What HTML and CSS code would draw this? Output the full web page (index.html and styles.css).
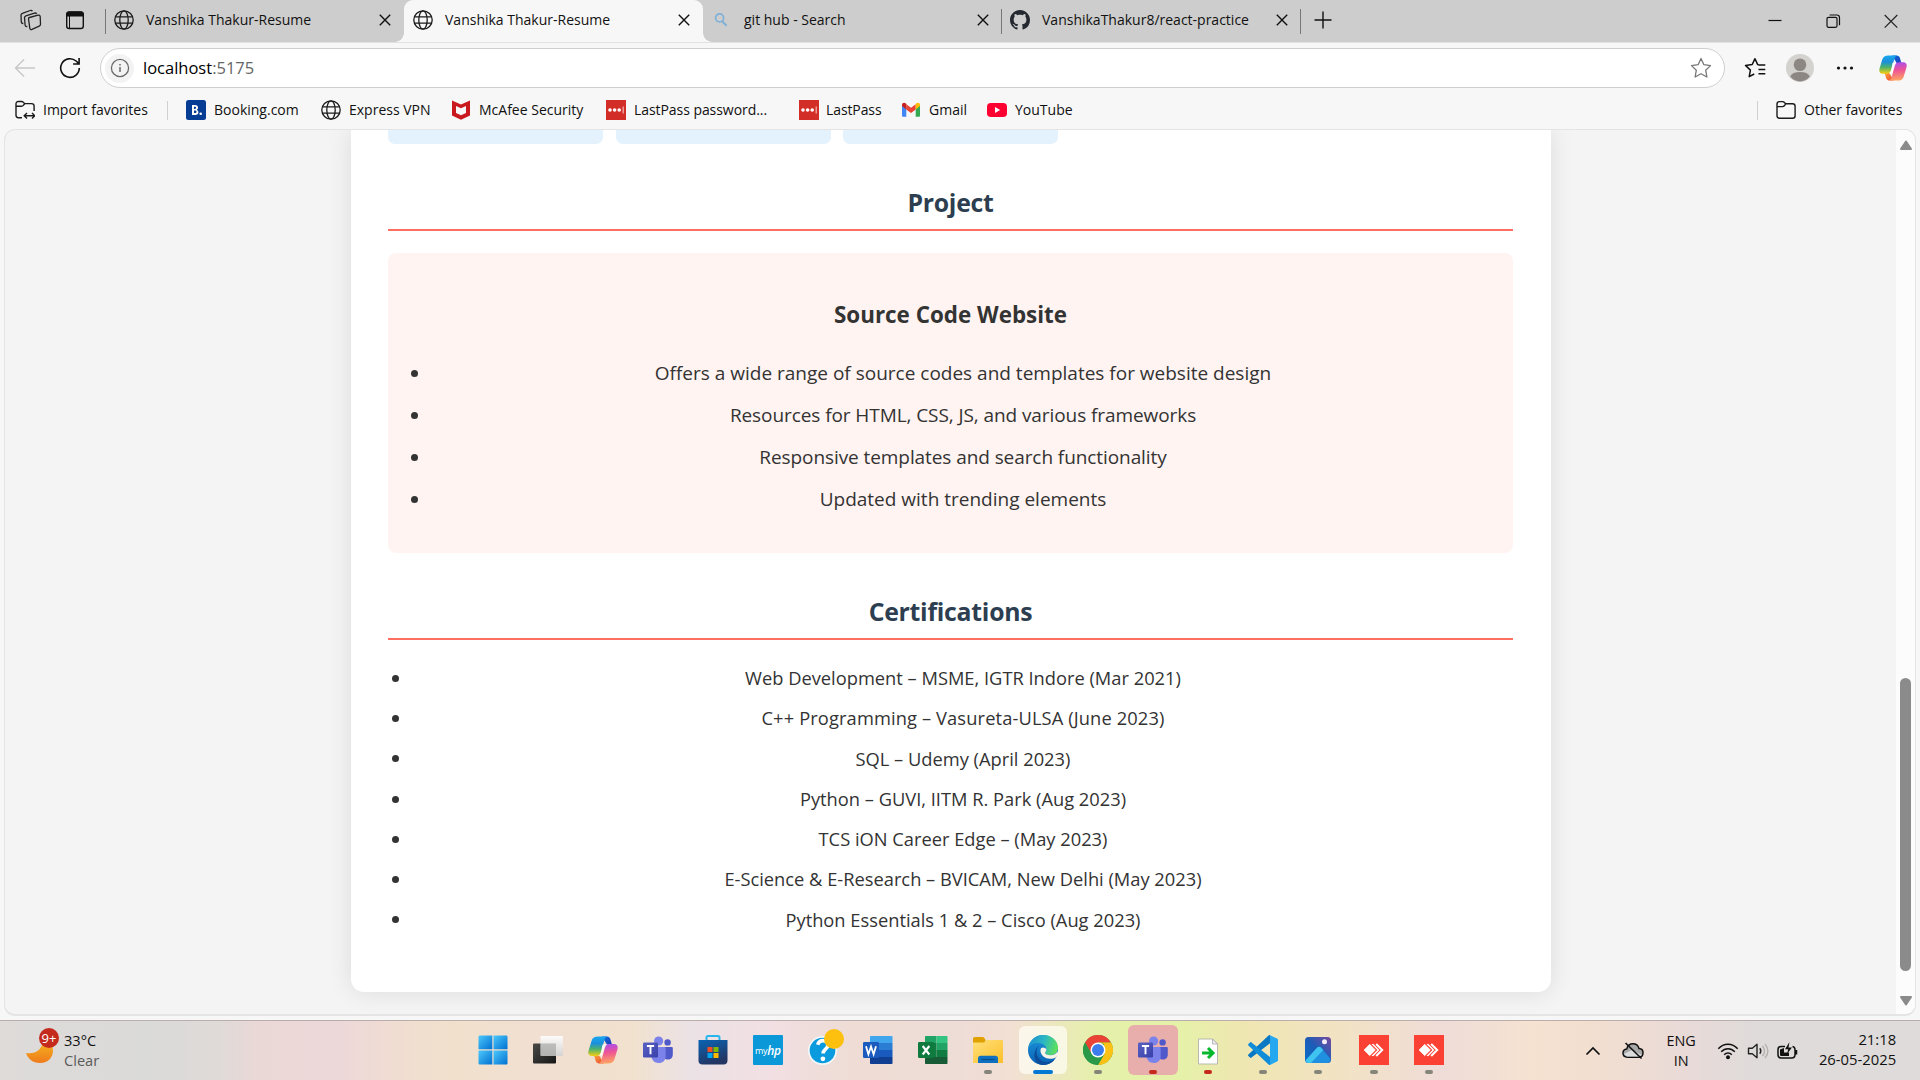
FILE: index.html
```html
<!DOCTYPE html>
<html lang="en">
<head>
<meta charset="utf-8">
<title>Vanshika Thakur-Resume</title>
<link rel="stylesheet" href="styles.css">
</head>
<body>
<svg class="defs" width="0" height="0" aria-hidden="true">
  <defs>
    <linearGradient id="cpA" x1="0" y1="0" x2="0" y2="1"><stop offset="0" stop-color="#1aa7f0"/><stop offset=".35" stop-color="#1a8fdc"/><stop offset=".65" stop-color="#4fb36a"/><stop offset="1" stop-color="#f7cf10"/></linearGradient>
    <linearGradient id="cpB" x1="0.3" y1="0" x2="0.4" y2="1"><stop offset="0" stop-color="#a74df0"/><stop offset=".45" stop-color="#ee5495"/><stop offset="1" stop-color="#ffa562"/></linearGradient>
    <linearGradient id="cpC" x1="0" y1="0" x2="1" y2="1"><stop offset="0" stop-color="#0f6fe0"/><stop offset="1" stop-color="#1b3fb8"/></linearGradient>
    <linearGradient id="cpD" x1="0" y1="0" x2="1" y2="1"><stop offset="0" stop-color="#f9a03a"/><stop offset="1" stop-color="#ee4a35"/></linearGradient>
    <linearGradient id="win" x1="0" y1="0" x2="1" y2="1"><stop offset="0" stop-color="#4cc9fb"/><stop offset="1" stop-color="#0070d2"/></linearGradient>
    <linearGradient id="moon" x1="0" y1="0" x2="0" y2="1"><stop offset="0" stop-color="#f5b21e"/><stop offset="1" stop-color="#ee7b1c"/></linearGradient>
    <linearGradient id="tvA" x1="0" y1="0" x2="1" y2="1"><stop offset="0" stop-color="#4a4a48"/><stop offset="1" stop-color="#161616"/></linearGradient>
    <linearGradient id="tvB" x1="0" y1="0" x2="0" y2="1"><stop offset="0" stop-color="#fff"/><stop offset="1" stop-color="#d2d2d2"/></linearGradient>
    <linearGradient id="store" x1="0" y1="0" x2=".4" y2="1"><stop offset="0" stop-color="#0a64b4"/><stop offset="1" stop-color="#223563"/></linearGradient>
    <linearGradient id="fold" x1="0" y1="0" x2="1" y2="1"><stop offset="0" stop-color="#ffe07a"/><stop offset="1" stop-color="#fcbf2a"/></linearGradient>
    <linearGradient id="edA" x1="0" y1="0.3" x2="1" y2="0.5"><stop offset="0" stop-color="#1c8fd0"/><stop offset=".5" stop-color="#2bb6c4"/><stop offset="1" stop-color="#5fe05a"/></linearGradient>
    <linearGradient id="edB" x1="0" y1="0" x2="0" y2="1"><stop offset="0" stop-color="#1c95dc"/><stop offset="1" stop-color="#0a62b4"/></linearGradient>
    <linearGradient id="photo" x1="0" y1="1" x2="1" y2="0"><stop offset="0" stop-color="#0a6fc8"/><stop offset=".5" stop-color="#1c5cb8"/><stop offset="1" stop-color="#7a4a9e"/></linearGradient>
    <linearGradient id="teamsSq" x1="0" y1="0" x2="1" y2="1"><stop offset="0" stop-color="#5a62c3"/><stop offset="1" stop-color="#3940ab"/></linearGradient>

    <symbol id="globe" viewBox="0 0 20 20"><g fill="none" stroke="#1b1b1b" stroke-width="1.3"><circle cx="10" cy="10" r="9.2"/><ellipse cx="10" cy="10" rx="4.2" ry="9.2"/><path d="M1.6 6.8h16.8M1.6 13.2h16.8"/></g></symbol>
    <symbol id="x" viewBox="0 0 16 16"><path d="M2.8 2.8l10.4 10.4M13.2 2.8L2.8 13.2" stroke="#111" stroke-width="1.4" fill="none"/></symbol>
    <symbol id="copilot" viewBox="0 0 30 28">
      <path d="M14 .6h4.6c2.2 0 3.3 1 3.9 3l1.4 5h-5z" fill="url(#cpC)"/>
      <path d="M16 27.4h-4.600c-2.200 0-3.300-1-3.900-3l-1.400-5h5z" fill="url(#cpD)"/>
      <path d="M10 .6h9.500c-1.800.4-2.500 1.800-3 3.500l-3.400 12c-.8 2.900-2.200 4-4.600 4H4C.8 20.100-.3 17.800.6 14.600L3.500 5C4.500 1.700 6.500.6 10 .6z" fill="url(#cpA)"/>
      <path d="M20 27.400h-9.500c1.800-.4 2.500-1.800 3-3.500l3.400-12c.8-2.900 2.200-4 4.600-4H26c3.200 0 4.300 2.300 3.400 5.500L26.500 23c-1 3.300-3 4.400-6.500 4.400z" fill="url(#cpB)"/>
      <path d="M14.500 8.500h3.600c-1 .8-1.500 1.900-1.900 3.300l-2.200 7.700h-3.400c1.200-.6 2-1.700 2.400-3.300z" fill="#fff" opacity=".85"/>
    </symbol>
    <symbol id="folder" viewBox="0 0 20 20"><path d="M1 4.200C1 2.500 1.800 1.600 3.400 1.600h3.200c.8 0 1.300.3 1.800.9l1.200 1.300h7c1.600 0 2.500.9 2.500 2.500v9.400c0 1.600-.9 2.500-2.500 2.500H3.400C1.800 18.200 1 17.300 1 15.700zM1 6.600h5.400c.9 0 1.400-.2 1.900-.8l1.400-2" fill="none" stroke="#1b1b1b" stroke-width="1.4"/></symbol>
    <symbol id="lastpass" viewBox="0 0 20 20"><path d="M0 0h20v20H0z" fill="#d32d27"/><circle cx="4" cy="10" r="1.800" fill="#fff"/><circle cx="8.600" cy="10" r="1.800" fill="#fff"/><circle cx="13.200" cy="10" r="1.800" fill="#fff"/><path d="M17.200 6.500v7" stroke="#f5b8b4" stroke-width="1.200"/></symbol>
    <symbol id="teams" viewBox="0 0 30 30">
      <circle cx="15.600" cy="6" r="4.600" fill="#7b83eb"/><circle cx="24.600" cy="7.400" r="3.200" fill="#5059c9"/>
      <path d="M19 12h9.500c.8 0 1.300.5 1.300 1.300v6.200c0 3-2 5-4.800 5-3 0-5-2-5-5z" fill="#5059c9"/>
      <path d="M9 12h12.200c.9 0 1.400.5 1.400 1.400v7.800c0 4-2.800 6.800-6.900 6.800S8.500 25.200 8.500 21z" fill="#7b83eb"/>
      <rect x="0" y="7.500" width="15" height="15" rx="1.200" fill="url(#teamsSq)"/><path d="M3.900 11h7.200M7.500 11v8.300" stroke="#fff" stroke-width="1.900"/>
    </symbol>
    <symbol id="anydesk" viewBox="0 0 30 30"><path d="M0 0h30v30H0z" fill="#fb4134"/><path d="M5 15l5.700-5.700L16.400 15l-5.700 5.700z" fill="#fff" stroke="#fff" stroke-width=".6"/><path d="M12.600 9.300l1.600-.6 6.200 6.300-6.200 6.300-1.600-.6 2.600-2.500 3.200-3.200-3.200-3.200z" fill="#fff"/><path d="M17.200 9l6 6-6 6" fill="none" stroke="#fff" stroke-width="2"/></symbol>
  </defs>
</svg>

<div class="window">
  <header class="tabstrip">
    <div class="strip-tools">
      <svg class="i22" viewBox="0 0 22 22"><g fill="none" stroke="#222" stroke-width="1.300"><path d="M9.500 8.500L18 6.200c1.200-.3 2 .2 2.200 1.300l.3 7.700c0 1-.4 1.600-1.300 2L12 20.400c-1.200.4-2-.1-2.200-1.200L8.500 10c-.1-.8.200-1.300 1-1.500z"/><path d="M7.300 17.500c-1.400.2-2-.4-2.200-1.400L4.500 8.700c0-1 .4-1.600 1.400-1.900l8.600-2.700c1-.3 1.700 0 2.100.8M3.300 14.500c-1.200.1-1.800-.5-2-1.500L1 6.300c0-1 .4-1.600 1.400-1.900L10.200 1.500c1-.4 1.800 0 2.200.8"/></g></svg>
      <svg class="i20" viewBox="0 0 20 20"><rect x="1.700" y="2" width="16.600" height="16.500" rx="2.600" fill="none" stroke="#111" stroke-width="1.400"/><path d="M1.500 6.500V4.200C1.500 2.500 2.500 1.500 4 1.500h12c1.500 0 2.500 1 2.500 2.700v2.300z" fill="#111"/><path d="M4.500 6v12" stroke="#111" stroke-width="1"/></svg>
    </div>
    <div class="tab first"><svg class="i20"><use href="#globe"/></svg><span>Vanshika Thakur-Resume</span><svg class="i16"><use href="#x"/></svg></div>
    <div class="tab active"><svg class="i20"><use href="#globe"/></svg><span>Vanshika Thakur-Resume</span><svg class="i16"><use href="#x"/></svg></div>
    <div class="tab search"><svg class="i20" viewBox="0 0 20 20"><circle cx="8.600" cy="7.900" r="4" fill="none" stroke="#7fb0d8" stroke-width="1.700"/><path d="M11.200 11.200l4.300 4.600" stroke="#7fb0d8" stroke-width="2"/></svg><span>git hub - Search</span><svg class="i16"><use href="#x"/></svg></div>
    <div class="tab divided"><svg class="i20" viewBox="0 0 16 16"><path fill="#24292f" d="M8 0C3.580 0 0 3.580 0 8c0 3.540 2.290 6.530 5.470 7.590.4.070.55-.17.550-.38 0-.19-.01-.82-.01-1.490-2.010.37-2.530-.49-2.690-.94-.09-.23-.48-.94-.82-1.130-.28-.15-.68-.52-.01-.53.63-.01 1.080.58 1.230.82.72 1.210 1.870.87 2.330.66.070-.52.280-.87.510-1.070-1.780-.2-3.640-.89-3.640-3.950 0-.87.310-1.590.82-2.150-.08-.2-.36-1.020.08-2.120 0 0 .67-.21 2.200.82.640-.18 1.320-.27 2-.27s1.360.09 2 .27c1.530-1.040 2.200-.82 2.200-.82.440 1.100.16 1.920.08 2.120.51.560.82 1.270.82 2.150 0 3.070-1.870 3.750-3.650 3.950.290.250.540.730.540 1.480 0 1.070-.01 1.930-.01 2.200 0 .21.150.46.550.38A8.010 8.010 0 0016 8c0-4.420-3.580-8-8-8z"/></svg><span>VanshikaThakur8/react-practice</span><svg class="i16"><use href="#x"/></svg></div>
    <div class="newtab"><svg class="i20" viewBox="0 0 20 20"><path d="M10 1.500v17M1.500 10h17" stroke="#111" stroke-width="1.400"/></svg></div>
    <div class="winctl">
      <svg class="i16" viewBox="0 0 16 16"><path d="M1.500 7.500h13" stroke="#111" stroke-width="1.200"/></svg>
      <svg class="i16" viewBox="0 0 16 16"><rect x="2" y="4.300" width="10" height="10" rx="1.500" fill="none" stroke="#111" stroke-width="1.200"/><path d="M4.600 2h7.200c1.700 0 2.700 1 2.700 2.700v7.500" fill="none" stroke="#111" stroke-width="1.200"/></svg>
      <svg class="i16" viewBox="0 0 16 16"><path d="M1.700 2l12.600 12.600M14.300 2L1.700 14.600" stroke="#222" stroke-width="1.200"/></svg>
    </div>
  </header>

  <div class="toolbar">
    <div class="nav">
      <svg class="i22" viewBox="0 0 22 22"><path d="M21 11H2M10 2.500L1.500 11l8.500 8.500" fill="none" stroke="#c8c8c8" stroke-width="1.400"/></svg>
      <svg class="i22" viewBox="0 0 22 22"><path d="M20.300 11a9.300 9.300 0 1 1-3.200-7l2.800 2.700M20.100 1v6h-6" fill="none" stroke="#111" stroke-width="1.600"/></svg>
    </div>
    <div class="address">
      <span class="site"><svg class="i20" viewBox="0 0 20 20"><circle cx="10" cy="10" r="8.600" fill="none" stroke="#6b6b6b" stroke-width="1.300"/><path d="M10 9v5M10 6v1.600" stroke="#6b6b6b" stroke-width="1.500"/></svg></span>
      <span class="url">localhost<span class="port">:5175</span></span>
      <svg class="i22" viewBox="0 0 22 22"><path d="M11 1.500l2.900 6.200 6.600.9-4.800 4.700 1.200 6.700L11 16.800 5.100 20l1.200-6.700L1.500 8.600l6.600-.9z" fill="none" stroke="#777" stroke-width="1.300" stroke-linejoin="round"/></svg>
    </div>
    <div class="actions">
      <svg class="i22" viewBox="0 0 22 22"><path d="M14.500 7.700l-.8-.1L11 1.700 8.200 7.500l-6.700.9 4.900 4.700-1.200 6.600 5-2.700M14.500 8h6.800M14.500 12.400h6.800M14.500 16.800h6.800" fill="none" stroke="#111" stroke-width="1.500" stroke-linejoin="round"/></svg>
      <svg class="i28" viewBox="0 0 28 28"><circle cx="14" cy="14" r="14" fill="#d4d2cf"/><circle cx="14" cy="10.700" r="6.300" fill="#8c8783"/><path d="M4.200 22.500c1.400-2.900 4.600-4.400 9.800-4.400s8.400 1.500 9.800 4.400A13.500 13.500 0 0 1 14 27.500a13.500 13.500 0 0 1-9.800-5z" fill="#8c8783"/></svg>
      <svg class="i20" viewBox="0 0 20 20"><g fill="#111"><circle cx="3.500" cy="10" r="1.600"/><circle cx="10" cy="10" r="1.600"/><circle cx="16.500" cy="10" r="1.600"/></g></svg>
      <svg class="i28"><use href="#copilot"/></svg>
    </div>
  </div>

  <nav class="favorites">
    <a class="fav import"><svg class="i20" viewBox="0 0 20 20"><path d="M7 17.700H3.400C1.800 17.700 1 16.800 1 15.200V3.900C1 2.400 1.800 1.500 3.400 1.500h3.200c.8 0 1.300.3 1.800.9l1.200 1.200h7c1.600 0 2.500.9 2.500 2.500V11M1 6.200h5.400c.9 0 1.400-.2 1.900-.8l1.400-1.700M9.500 15.800h10M12 13l-2.800 2.800L12 18.600M17 13l2.800 2.800L17 18.600" fill="none" stroke="#1b1b1b" stroke-width="1.400"/></svg><span>Import favorites</span></a>
    <a class="fav booking"><svg class="i20" viewBox="0 0 20 20"><rect width="20" height="20" rx="2.500" fill="#053c94"/><path d="M6 5v10h3.200c2 0 3.200-1 3.200-2.700 0-1.300-.7-2.100-1.800-2.400.9-.4 1.400-1.100 1.400-2.200C12 6 10.900 5 9 5zm2 1.700h.9c.8 0 1.200.4 1.200 1.100S9.700 9 8.900 9H8zm0 3.900h1.100c.9 0 1.400.4 1.400 1.200s-.5 1.300-1.400 1.300H8z" fill="#fff" fill-rule="evenodd"/><circle cx="14.700" cy="13.800" r="1.300" fill="#fff"/></svg><span>Booking.com</span></a>
    <a class="fav vpn"><svg class="i20"><use href="#globe"/></svg><span>Express VPN</span></a>
    <a class="fav mcafee"><svg class="i20" viewBox="0 0 20 20"><path d="M1 .5l9 4 9-4v15l-9 4.300-9-4.300z" fill="#c9181e"/><path d="M5 6l5 2.300L15 6v7l-5 2.300L5 13z" fill="#f7f7f7"/></svg><span>McAfee Security</span></a>
    <a class="fav lp1"><svg class="i20"><use href="#lastpass"/></svg><span>LastPass password...</span></a>
    <a class="fav lp2"><svg class="i20"><use href="#lastpass"/></svg><span>LastPass</span></a>
    <a class="fav gmail"><svg class="i20" viewBox="0 0 20 20"><path d="M1 5v10.500c0 .8.500 1.300 1.300 1.300h3V8z" fill="#4285f4"/><path d="M14.700 8v8.800h3c.8 0 1.300-.5 1.300-1.300V5z" fill="#34a853"/><path d="M5.300 4.200L10 7.800l4.700-3.600v5.200L10 13 5.300 9.400z" fill="#ea4335"/><path d="M1 6.100V5c0-2 2.100-2.900 3.600-1.700l.7.600v5.500z" fill="#c5221f"/><path d="M19 6.100V5c0-2-2.100-2.900-3.600-1.700l-.7.600v5.500z" fill="#fbbc04"/></svg><span>Gmail</span></a>
    <a class="fav youtube"><svg class="i20" viewBox="0 0 20 20"><rect y="3" width="20" height="14" rx="3.800" fill="#ff0033"/><path d="M8 7l5.200 3L8 13z" fill="#fff"/></svg><span>YouTube</span></a>
    <a class="fav other"><svg class="i20"><use href="#folder"/></svg><span>Other favorites</span></a>
  </nav>

  <div class="viewport">
    <main class="page">
      <article class="resume">
        <div class="skills"><div class="skill"></div><div class="skill"></div><div class="skill"></div></div>
        <h2>Project</h2>
        <section class="project">
          <h3>Source Code Website</h3>
          <ul>
            <li><span>Offers a wide range of source codes and templates for website design</span></li>
            <li class="tight"><span>Resources for HTML, CSS, JS, and various frameworks</span></li>
            <li class="tight"><span>Responsive templates and search functionality</span></li>
            <li><span>Updated with trending elements</span></li>
          </ul>
        </section>
        <h2>Certifications</h2>
        <ul class="certs">
          <li><span>Web Development – MSME, IGTR Indore (Mar 2021)</span></li>
          <li class="loose"><span>C++ Programming – Vasureta-ULSA (June 2023)</span></li>
          <li><span>SQL – Udemy (April 2023)</span></li>
          <li><span>Python – GUVI, IITM R. Park (Aug 2023)</span></li>
          <li><span>TCS iON Career Edge – (May 2023)</span></li>
          <li><span>E-Science &amp; E-Research – BVICAM, New Delhi (May 2023)</span></li>
          <li><span>Python Essentials 1 &amp; 2 – Cisco (Aug 2023)</span></li>
        </ul>
      </article>
    </main>
    <div class="scrollbar">
      <svg width="14" height="11" viewBox="0 0 14 11"><path d="M7 1.500l5 7.500H2z" fill="#8b8b8b" stroke="#8b8b8b" stroke-width="2" stroke-linejoin="round"/></svg>
      <div class="thumb"></div>
      <svg width="14" height="11" viewBox="0 0 14 11"><path d="M7 9.500L2 2h10z" fill="#8b8b8b" stroke="#8b8b8b" stroke-width="2" stroke-linejoin="round"/></svg>
    </div>
  </div>
</div>

<footer class="taskbar">
  <div class="weather">
    <div class="moon"><svg width="28" height="22" viewBox="0 0 28 22"><path d="M0 11c7 1 15-1 17-11h7c6 8 3 21-10 21C7 21 2 17 0 11z" fill="url(#moon)"/></svg><span class="count">9+</span></div>
    <div class="temp"><div>33°C</div><div class="muted">Clear</div></div>
  </div>
  <div class="apps">
    <div class="app"><svg class="i30" viewBox="0 0 30 30"><g fill="url(#win)"><path d="M.5 2C.5 1 1 .5 2 .5h12.300v13.700H.5z"/><path d="M15.500.5H28c1 0 1.500.5 1.500 1.500v12.200h-14z"/><path d="M.5 15.500h13.800v14H2c-1 0-1.500-.5-1.500-1.500z"/><path d="M15.500 15.500h14V28c0 1-.5 1.500-1.500 1.500H15.500z"/></g></svg></div>
    <div class="app"><svg class="i30" viewBox="0 0 30 30"><rect x="0" y="8.500" width="23" height="20" rx="1" fill="url(#tvA)"/><rect x="7.500" y="1" width="22.500" height="20" rx="1.200" fill="url(#tvB)" opacity=".9"/><path d="M7.500 8.500H23V21H7.500z" fill="#a9a9a7" opacity=".6"/></svg></div>
    <div class="app"><svg class="i30"><use href="#copilot"/></svg></div>
    <div class="app"><svg class="i30"><use href="#teams"/></svg></div>
    <div class="app"><svg class="i30" viewBox="0 0 30 30"><path d="M8.500 5.500V2.700c0-1 .5-1.600 1.600-1.600h9.800c1.100 0 1.600.6 1.600 1.600v2.800" fill="none" stroke="#27b5ee" stroke-width="2"/><path d="M.5 5h29v20.500c0 2.600-1.400 4-4 4h-21c-2.600 0-4-1.400-4-4z" fill="url(#store)"/><path d="M9.500 12h5v5h-5z" fill="#f25022"/><path d="M15.500 12h5v5h-5z" fill="#7fba00"/><path d="M9.500 18h5v5h-5z" fill="#00a4ef"/><path d="M15.500 18h5v5h-5z" fill="#ffb900"/></svg></div>
    <div class="app"><div class="myhp"><span>my</span><b>hp</b></div></div>
    <div class="app help"><svg class="i30" viewBox="0 0 30 30"><circle cx="14.500" cy="15.500" r="13.700" fill="#0a9ade" stroke="#f4f7f8" stroke-width="1.700"/><path d="M9.700 9.800c.8-2.800 2.500-4.200 5.200-4.200 3 0 5 1.700 5 4.300 0 2.200-1.100 3.300-2.800 4.700-1.500 1.200-2 2-2 4" fill="none" stroke="#fff" stroke-width="3.600"/><circle cx="14.900" cy="23.800" r="2.400" fill="#fff"/></svg><i class="alert"></i></div>
    <div class="app"><svg class="i30" viewBox="0 0 30 30"><path d="M8 1h20.500c.6 0 1 .4 1 1v6H7V2c0-.6.400-1 1-1z" fill="#41a5ee"/><path d="M7 8h22.500v7H7z" fill="#2b7cd3"/><path d="M7 15h22.500v7H7z" fill="#185abd"/><path d="M7 22h22.500v6c0 .6-.4 1-1 1H8c-.6 0-1-.4-1-1z" fill="#103f91"/><rect x="0" y="7" width="16" height="16" rx="1.300" fill="#1b5bbd"/><path d="M3 11.200l2.400 8L8 11.500l2.600 7.700 2.400-8" fill="none" stroke="#fff" stroke-width="1.800"/></svg></div>
    <div class="app"><svg class="i30" viewBox="0 0 30 30"><path d="M8 1h10.500v7H7V2c0-.6.400-1 1-1z" fill="#21a366"/><path d="M18.500 1h10c.6 0 1 .4 1 1v6h-11z" fill="#33c481"/><path d="M7 8h11.500v7H7zM7 15h11.500v7H7z" fill="#107c41"/><path d="M18.500 8h11v7h-11z" fill="#21a366"/><path d="M18.500 15h11v7h-11z" fill="#107c41"/><path d="M7 22h22.500v6c0 .6-.4 1-1 1H8c-.6 0-1-.4-1-1z" fill="#185c37"/><rect x="0" y="7" width="16" height="16" rx="1.300" fill="#0f7a3e"/><path d="M4.700 11l6.600 8.500M11.300 11l-6.600 8.500" stroke="#fff" stroke-width="2.100"/></svg></div>
    <div class="app run"><svg class="i30" viewBox="0 0 30 30"><path d="M0 4c0-1.200.7-2 2-2h7.500c.8 0 1.400.3 1.900.9L12.500 5v4H0z" fill="#e0a100"/><path d="M0 7.500h11L13.500 5H28.500c1 0 1.500.5 1.500 1.500V28H0z" fill="url(#fold)"/><path d="M5 28v-4.500c0-1.800 1-2.800 2.800-2.800h14.400c1.800 0 2.800 1 2.800 2.800V28z" fill="#0f70c0"/><path d="M8.500 24.500h13" stroke="#0a4d8c" stroke-width="1.200"/></svg></div>
    <div class="app run focus"><svg class="i30" viewBox="0 0 30 30"><circle cx="15" cy="15" r="15" fill="url(#edB)"/><path d="M.2 13.500C1.500 5.500 7.500 0 15.200 0 23.800 0 30 5.800 30 12.800c0 4.400-3.300 7.400-7.500 7.400-3.400 0-5.400-1.100-5.400-2.300 0-.9 1.300-1.500 1.300-3.500 0-3.700-4.100-6.400-8.700-6.400-4.200 0-7.800 2-9.500 5.500z" fill="url(#edA)"/><path d="M11 10.500c-2.800 3.200-3.400 8-.4 12.300 3.500 5 10.500 5.700 16.500 1.200C24.200 28 19.900 30 15 30 8.400 30 6 24 6.400 19.500c.3-3.700 2-7 4.600-9z" fill="#0c4e9c"/><path d="M13.200 13c1.500-1.200 4.500-.6 5.200 1.400.1 2-1.300 2.600-1.300 3.500 0 1.200 2 2.300 5.400 2.300 3.200 0 5.700-1.400 6.900-3.900l.8 2.600c-.6 1.600-1.300 2.500-2.100 3.300-2.600 1.600-5.400 2-8 1.400-5.500-1.200-9.300-6.400-6.900-10.600z" fill="#f7f3e6"/></svg></div>
    <div class="app run"><svg class="i30" viewBox="0 0 30 30"><circle cx="15" cy="15" r="15" fill="#34a853"/><path d="M2 7.500a15 15 0 0 1 26 0H15v7L8.500 18.800z" fill="#ea4335"/><path d="M28 7.500A15 15 0 0 1 15 30l6.500-11.200L21 9l-6-1.500z" fill="#fbc116"/><path d="M2 7.500A15 15 0 0 0 15 30l6.500-11.200H8.500z" fill="#2a9a48"/><circle cx="15" cy="15" r="7.500" fill="#fff"/><circle cx="15" cy="15" r="6" fill="#3b7ded"/></svg></div>
    <div class="app run red pink"><svg class="i30"><use href="#teams"/></svg></div>
    <div class="app run red"><svg class="i30" viewBox="0 0 30 30"><path d="M5.500 4h14l5 5v20h-19z" fill="#fff" stroke="#b9b9b0" stroke-width="1"/><path d="M19.500 4v5h5z" fill="#eee" stroke="#aaa" stroke-width=".8"/><path d="M9 18h10M15 13l5 5-5 5" fill="none" stroke="#06b92c" stroke-width="3"/></svg></div>
    <div class="app run"><svg class="i30" viewBox="0 0 30 30"><path d="M22 .2l7 3.200c.6.300 1 .8 1 1.500V25c0 .7-.4 1.300-1 1.600l-7 3.300z" fill="#25a8f0"/><path d="M22 .2v8L3.500 22.600c-.5.4-1 .4-1.500 0l-1.600-1.500c-.5-.5-.5-1.200 0-1.700L20.300.7C20.800.2 21.400 0 22 .2z" fill="#0a77c4"/><path d="M22 29.900v-8L3.500 7.400c-.5-.4-1-.4-1.500 0L.4 8.900c-.5.500-.5 1.200 0 1.700l19.900 18.700c.5.5 1.100.8 1.700.6z" fill="#108cd8"/></svg></div>
    <div class="app run"><svg class="i30" viewBox="0 0 30 30"><rect x="2" y="2" width="26" height="26" rx="3.500" fill="url(#photo)"/><path d="M2.500 25.500L14 12.700c1.300-1.400 2.900-1.400 4.200 0L27.500 24c-.4 2.600-1.600 4-4 4h-18c-1.500 0-2.700-.8-3-2.500z" fill="#1f8fe0"/><path d="M2.500 25.500L14 12.700c1.300-1.400 2.900-1.400 4.200 0l2 2.400L8 28H5.500c-1.500 0-2.700-.8-3-2.500z" fill="#3fc4f0"/><circle cx="21.500" cy="6.700" r="2.500" fill="#f3ecf6"/></svg></div>
    <div class="app run"><svg class="i30"><use href="#anydesk"/></svg></div>
    <div class="app run"><svg class="i30"><use href="#anydesk"/></svg></div>
  </div>
  <div class="tray">
    <svg class="chev" width="16" height="16" viewBox="0 0 16 16"><path d="M1.500 11.500L8 5l6.500 6.500" fill="none" stroke="#111" stroke-width="1.700"/></svg>
    <svg class="cloud" width="22" height="18" viewBox="0 0 22 18"><path d="M5.500 15.200C2.800 15.200 1 13.500 1 11.100c0-2.200 1.500-3.800 3.700-4C5.500 3.700 8 1.800 11 1.800s5.200 1.800 6 4.700c2.400.1 4 1.800 4 4.200 0 2.700-1.800 4.500-4.500 4.500z" fill="#a8a8a8" stroke="#111" stroke-width="1.500"/><path d="M2 12l8-4 10 5-3 1.500H5z" fill="#dcdcdc"/><path d="M3.500 1l16 15.500" stroke="#111" stroke-width="1.600"/></svg>
    <div class="lang"><div>ENG</div><div>IN</div></div>
    <svg class="wifi" width="22" height="18" viewBox="0 0 22 18"><g fill="none" stroke="#111" stroke-width="1.500"><path d="M1.300 6.800C6.700.7 15.300.7 20.700 6.800M4.200 9.800c3.800-4.200 9.800-4.200 13.600 0M7.200 12.700c2.200-2.300 5.400-2.300 7.600 0"/></g><circle cx="11" cy="15.200" r="2" fill="#111"/></svg>
    <svg class="vol" width="22" height="18" viewBox="0 0 22 18"><path d="M1.500 6.200h3.800L10 2.300v13.400l-4.700-3.900H1.500z" fill="none" stroke="#222" stroke-width="1.400" stroke-linejoin="round"/><path d="M12.800 6.300c1.300 1.700 1.300 3.700 0 5.400" fill="none" stroke="#222" stroke-width="1.400"/><path d="M15.500 4c2.600 3.200 2.600 6.800 0 10M18 1.800c3.700 4.600 3.700 9.800 0 14.400" fill="none" stroke="#b3b0ae" stroke-width="1.300"/></svg>
    <svg class="batt" width="21" height="18" viewBox="0 0 21 18"><path d="M8 4.500H4.300C2.300 4.500 1 5.700 1 7.700v5.100c0 2 1.300 3.200 3.300 3.200h10.400c2 0 3.300-1.200 3.300-3.200V7.700c0-1.700-.9-2.900-2.500-3.200M19.500 8v4.500" fill="none" stroke="#111" stroke-width="1.500"/><path d="M3 7.500L7 6v4.500h5V14H4.500C3.500 14 3 13.500 3 12.500z" fill="#111"/><path d="M12.500 0L8 7.200h3.200L10 12l5-6.500h-3.500z" fill="#111"/></svg>
    <div class="clock"><div>21:18</div><div>26-05-2025</div></div>
  </div>
</footer>
</body>
</html>
```
FILE: styles.css
```css
* { box-sizing: border-box; }

body {
  margin: 0;
  width: 1920px;
  height: 1080px;
  overflow: hidden;
  display: flex;
  flex-direction: column;
  font-family: "Open Sans", "Noto Sans", sans-serif;
  font-size: 14px;
  color: #111;
  background: #f7f7f7;
}

svg { display: block; flex: none; }
.defs { position: absolute; }
.i16 { width: 16px; height: 16px; }
.i20 { width: 20px; height: 20px; }
.i22 { width: 22px; height: 22px; }
.i28 { width: 28px; height: 28px; }
.i30 { width: 30px; height: 30px; }

.window { height: 1020px; display: flex; flex-direction: column; }

/* Tab strip */
.tabstrip {
  height: 42px;
  display: flex;
  background: #cdcdcd;
}
.strip-tools {
  width: 106px;
  display: flex;
  align-items: center;
  gap: 23px;
  padding: 0 0 2px 20px;
  position: relative;
}
.strip-tools::after,
.divided::before,
.divided::after {
  content: "";
  position: absolute;
  top: 9px;
  right: 0;
  width: 1px;
  height: 25px;
  background: #777;
}
.divided::before { right: auto; left: -1px; }
.tab {
  width: 299px;
  display: flex;
  align-items: center;
  gap: 12px;
  padding: 0 11px 2px 8px;
  position: relative;
  white-space: nowrap;
}
.tab.first { width: 298px; }
.tab.search { gap: 13px; }
.tab span { flex: 1; padding-bottom: 2px; }
.tab.active {
  background: #f7f7f7;
  border-radius: 9px 9px 0 0;
  padding-left: 9px;
}
.tab.active::before,
.tab.active::after {
  content: "";
  position: absolute;
  bottom: 0;
  width: 9px;
  height: 9px;
}
.tab.active::before { left: -9px; background: radial-gradient(circle at 0 0, #cdcdcd 8.5px, #f7f7f7 9px); }
.tab.active::after { right: -9px; background: radial-gradient(circle at 100% 0, #cdcdcd 8.5px, #f7f7f7 9px); }
.newtab { padding: 10px 0 0 12px; width: 466px; }
.winctl { display: flex; gap: 42px; padding-top: 13px; }

/* Toolbar */
.toolbar {
  height: 52px;
  display: flex;
  align-items: center;
  padding-bottom: 1px;
  border-top: 1px solid #e2e2e2;
}
.nav { width: 100px; display: flex; gap: 23px; padding-left: 14px; }
.address {
  width: 1625px;
  height: 40px;
  display: flex;
  align-items: center;
  padding: 0 12px 0 4px;
  background: #fff;
  border: 1px solid #cfcfcf;
  border-radius: 20px;
}
.site {
  width: 29px;
  height: 29px;
  display: grid;
  place-items: center;
  border-radius: 50%;
  background: #f3f3f3;
}
.url { flex: 1; margin-left: 9px; padding-bottom: 1px; font-size: 16.5px; color: #000; }
.port { color: #666; }
.actions { flex: 1; display: flex; align-items: center; padding-left: 19px; }
.actions svg:nth-child(2) { margin-left: 20px; }
.actions svg:nth-child(3) { margin-left: 21px; }
.actions svg:nth-child(4) { margin-left: 24px; }

/* Favorites bar */
.favorites { height: 35px; display: flex; padding: 0 0 3px 15px; }
.fav { display: flex; align-items: center; gap: 8px; white-space: nowrap; position: relative; }
.fav span { padding-bottom: 2px; }
.import { width: 171px; }
.booking { width: 135px; }
.vpn { width: 130px; }
.mcafee { width: 155px; }
.lp1 { width: 193px; letter-spacing: -.06px; }
.lp2 { width: 102px; gap: 7px; letter-spacing: -.1px; }
.gmail { width: 86px; }
.youtube { width: 789px; }
.import::after,
.other::before {
  content: "";
  position: absolute;
  top: 7px;
  width: 1px;
  height: 19px;
  background: #d0d0d0;
}
.import::after { left: 152px; }
.other::before { left: -19px; }

/* Page area */
.viewport {
  height: 887px;
  margin: 0 4px 0 4px;
  display: flex;
  overflow: hidden;
  background: #f4f4f4;
  border: 1px solid #e4e4e4;
  border-bottom-width: 2px;
  border-radius: 11px;
}
.page { width: 1891px; display: flex; justify-content: center; }
.resume {
  width: 1200px;
  height: 862px;
  padding: 0 37.5px;
  background: #fff;
  border-radius: 0 0 13px 13px;
  box-shadow: 0 0 25px rgba(0, 0, 0, .1);
  color: #333;
}
.skills { display: flex; gap: 12.5px; }
.skill { width: 215px; height: 14px; background: #e3f2fd; border-radius: 0 0 7px 7px; }
h2, h3, ul { margin: 0; padding: 0; list-style: none; text-align: center; }
h2 {
  margin-top: 38px;
  padding-bottom: 7px;
  border-bottom: 2px solid #ff6f61;
  font-size: 24.8px;
  line-height: 40px;
  letter-spacing: -.25px;
  color: #2c3e50;
}
.project {
  height: 300px;
  margin-top: 22px;
  padding: 46px 19px 0;
  background: #fff4f1;
  border-radius: 8px;
}
h3 { font-size: 22.4px; line-height: 32px; }
li { display: flex; align-items: center; }
li::before { content: ""; width: 7px; height: 7px; border-radius: 50%; background: #333; }
li span { flex: 1; margin-left: 14px; }
.project ul { margin-top: 21px; }
.project li { padding-left: 4px; font-size: 19px; line-height: 42px; }
.project .tight { letter-spacing: -.08px; }
.certs { margin-top: 18px; }
.certs li { padding-left: 4px; font-size: 18.3px; line-height: 40.3px; }
.certs .loose { letter-spacing: .12px; }

.scrollbar {
  width: 19px;
  display: flex;
  flex-direction: column;
  align-items: center;
  padding: 10px 0 8px;
  background: #fcfcfc;
}
.thumb { width: 11px; height: 294px; margin: 527px 0 24px; border-radius: 6px; background: #8b8b8b; }

/* Taskbar */
.taskbar {
  height: 60px;
  display: flex;
  border-top: 1px solid #b9aeac;
  background: linear-gradient(90deg, #dedbd9 0, #dadad9 150px, #dfdad8 220px, #ead8d6 260px, #edd8d9 340px, #f0ddd1 400px, #f1e1cc 450px, #f1dfd2 540px, #f1e1cd 630px, #ebe2e5 690px, #f1dfe3 770px, #eedcd5 850px, #eedcd6 960px, #f2e0d4 1010px, #ebe9bb 1060px, #e5f1aa 1100px, #e5f1a8 1180px, #efe7b1 1240px, #f2e2c6 1350px, #efdcd8 1440px, #f5e2d1 1530px, #f3dfd0 1590px, #e8dad8 1690px, #dedbda 1760px, #dedbda 1920px);
}
.weather { width: 465px; display: flex; padding-left: 26px; }
.moon { width: 38px; position: relative; padding-top: 21px; }
.count {
  position: absolute;
  left: 13px;
  top: 7px;
  width: 20px;
  height: 20px;
  border-radius: 50%;
  background: #c42b1c;
  color: #fff;
  font-size: 13px;
  line-height: 20px;
  text-align: center;
}
.temp { padding-top: 9px; line-height: 20px; font-size: 14.6px; }
.muted { color: #5a5a5a; }
.apps { display: flex; }
.app { width: 55.07px; position: relative; display: flex; justify-content: center; padding-top: 14px; }
.run::after {
  content: "";
  position: absolute;
  bottom: 6px;
  width: 8px;
  height: 4px;
  border-radius: 2px;
  background: #85857a;
}
.red::after { background: #c42b1c; }
.focus::after { width: 20px; background: #0078d4; }
.focus::before,
.pink::before {
  content: "";
  position: absolute;
  top: 5px;
  width: 48px;
  height: 48px;
  border-radius: 6px;
  background: rgba(255, 253, 246, .7);
}
.pink::before { top: 4px; width: 50px; height: 50px; background: #e8aeab; }
.app svg { position: relative; }
.myhp {
  width: 30px;
  height: 30px;
  display: flex;
  align-items: center;
  justify-content: center;
  border-radius: 1px;
  background: #0a98d8;
  color: #fff;
  font-size: 9px;
  letter-spacing: -.3px;
}
.myhp b { font-size: 12px; font-style: italic; font-weight: 600; }
.alert { position: absolute; left: 29px; top: 8px; width: 20px; height: 20px; border-radius: 50%; background: #fdc00f; }

.tray { display: flex; align-items: center; margin-left: 129px; font-size: 14.4px; line-height: 20px; }
.cloud { margin-left: 21px; }
.lang { width: 44px; margin-left: 15px; text-align: center; }
.wifi { margin-left: 14px; }
.vol { margin-left: 8px; }
.batt { margin-left: 8px; }
.clock { flex: 1; width: 98px; padding-bottom: 4px; text-align: right; font-size: 14.8px; }
```
